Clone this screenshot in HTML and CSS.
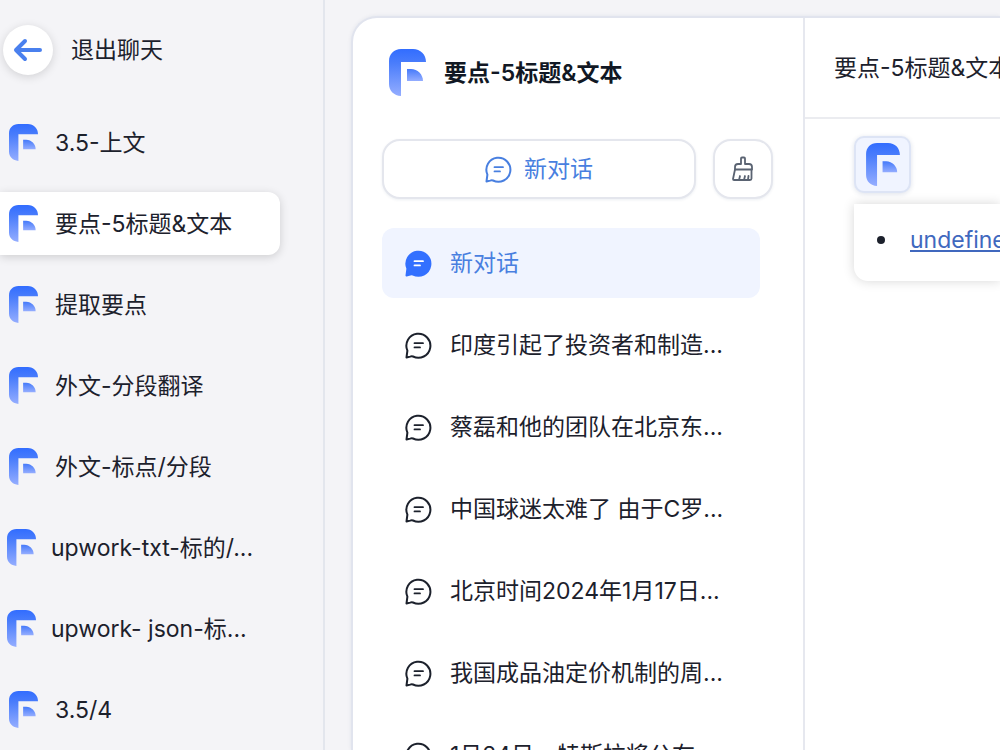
FILE: index.html
```html
<!DOCTYPE html>
<html lang="zh-CN">
<head>
  <meta charset="UTF-8">
  <meta name="viewport" content="width=device-width, initial-scale=1.0">
  <title>要点-5标题&amp;文本</title>
  <link rel="stylesheet" href="styles.css">
</head>
<body>
  <!-- Shared icons -->
  <svg class="sprite" aria-hidden="true">
    <defs>
      <linearGradient id="logoOuter" x1="0" y1="0" x2="0" y2="1">
        <stop offset="0" stop-color="#326dff"/>
        <stop offset="0.3" stop-color="#4a7dfb"/>
        <stop offset="1" stop-color="#94adff"/>
      </linearGradient>
      <linearGradient id="logoInner" x1="0" y1="0" x2="0" y2="1">
        <stop offset="0" stop-color="#457afa"/>
        <stop offset="1" stop-color="#94adff"/>
      </linearGradient>
    </defs>
    <symbol id="logo" viewBox="0 0 37 47">
      <path fill="url(#logoOuter)" d="M12 47C5 46.500 0 42 0 35V12C0 5 5 0 12 0H24C31.500 0 37 5.500 37 13H12Z"/>
      <path fill="url(#logoInner)" d="M18 20H22C28.500 20 34 25.500 34 32H18Z"/>
    </symbol>
    <symbol id="chat" viewBox="0 0 27 27">
      <path fill="none" stroke="currentColor" stroke-width="2" stroke-linejoin="round" d="M1.500 25.500L2.400 18.600A12 12 0 1 1 8 24.500Q6.500 24.100 5.200 24.600Z"/>
      <path fill="none" stroke="currentColor" stroke-width="1.800" stroke-linecap="round" d="M9.500 11.200H18M9.500 15.400H15"/>
    </symbol>
    <symbol id="chatFill" viewBox="0 0 27 27">
      <path fill="#3370ff" stroke="#3370ff" stroke-width="2" stroke-linejoin="round" d="M1.500 25.500L2.400 18.600A12 12 0 1 1 8 24.500Q6.500 24.100 5.200 24.600Z"/>
      <path fill="none" stroke="#fff" stroke-width="1.800" stroke-linecap="round" d="M9.500 11.200H18M9.500 15.400H15"/>
    </symbol>
  </svg>

  <div class="app">
    <aside class="sidebar">
      <div class="exit">
        <button class="back-btn" id="back" aria-label="退出聊天">
          <svg width="30" height="26" viewBox="0 0 30 26"><path d="M12 4L3 13L12 22M3 13H27" fill="none" stroke="#4a80ee" stroke-width="4" stroke-linecap="round" stroke-linejoin="round"/></svg>
        </button>
        <label for="back">退出聊天</label>
      </div>
      <nav class="app-list">
        <a href="#" class="app-item"><svg class="logo"><use href="#logo"/></svg>3.5-上文</a>
        <a href="#" class="app-item active"><svg class="logo"><use href="#logo"/></svg>要点-5标题&amp;文本</a>
        <a href="#" class="app-item"><svg class="logo"><use href="#logo"/></svg>提取要点</a>
        <a href="#" class="app-item"><svg class="logo"><use href="#logo"/></svg>外文-分段翻译</a>
        <a href="#" class="app-item"><svg class="logo"><use href="#logo"/></svg>外文-标点/分段</a>
        <a href="#" class="app-item long"><svg class="logo"><use href="#logo"/></svg>upwork-txt-标的/...</a>
        <a href="#" class="app-item long"><svg class="logo"><use href="#logo"/></svg>upwork- json-标...</a>
        <a href="#" class="app-item"><svg class="logo"><use href="#logo"/></svg>3.5/4</a>
      </nav>
    </aside>

    <main class="panel">
      <section class="history">
        <h1 class="history-title"><svg class="logo-lg"><use href="#logo"/></svg>要点-5标题&amp;文本</h1>
        <div class="actions">
          <button class="new-btn"><svg class="icon"><use href="#chat"/></svg>新对话</button>
          <button class="clear-btn" aria-label="清空">
            <svg width="22" height="26" viewBox="0 0 22 26" fill="none" stroke="#5a6372" stroke-width="1.800" stroke-linejoin="round" stroke-linecap="round">
              <path d="M9 8V2.500Q9 1.500 10 1.500H12Q13 1.500 13 2.500V8H17Q20 8 20 11V13.500H3V11Q3 8 6 8Z"/>
              <path d="M3 13.500L1 23Q1 24 2 24H18Q19.500 24 19.500 22.500V13.500M7 24L8 20M12 24L13 20M16 23.500L16.500 20"/>
            </svg>
          </button>
        </div>
        <nav class="chat-list">
          <a href="#" class="chat-item active"><svg class="icon"><use href="#chatFill"/></svg>新对话</a>
          <a href="#" class="chat-item"><svg class="icon"><use href="#chat"/></svg>印度引起了投资者和制造...</a>
          <a href="#" class="chat-item"><svg class="icon"><use href="#chat"/></svg>蔡磊和他的团队在北京东...</a>
          <a href="#" class="chat-item"><svg class="icon"><use href="#chat"/></svg>中国球迷太难了 由于C罗...</a>
          <a href="#" class="chat-item"><svg class="icon"><use href="#chat"/></svg>北京时间2024年1月17日...</a>
          <a href="#" class="chat-item"><svg class="icon"><use href="#chat"/></svg>我国成品油定价机制的周...</a>
          <a href="#" class="chat-item"><svg class="icon"><use href="#chat"/></svg>1月24日，特斯拉将公布...</a>
        </nav>
      </section>

      <section class="conversation">
        <header class="conversation-header">要点-5标题&amp;文本</header>
        <div class="messages">
          <div class="avatar"><svg><use href="#logo"/></svg></div>
          <div class="bubble">
            <ul>
              <li><a href="#">undefined</a></li>
            </ul>
          </div>
        </div>
      </section>
    </main>
  </div>
</body>
</html>
```
FILE: styles.css
```css
* {
  box-sizing: border-box;
}

body {
  margin: 0;
  background-color: #f4f4f7;
  color: #1c212c;
  font-family: Inter, "Noto Sans CJK SC", sans-serif;
  font-size: 23px;
  line-height: 34px;
}

a {
  color: inherit;
  text-decoration: none;
}

button {
  font: inherit;
  color: inherit;
  padding: 0;
  background-color: #fff;
  cursor: pointer;
}

svg {
  flex-shrink: 0;
}

.sprite {
  position: absolute;
  width: 0;
  height: 0;
}

.app {
  display: flex;
  height: 100vh;
  overflow: hidden;
  white-space: nowrap;
}

/* Left sidebar */
.sidebar {
  flex: 0 0 325px;
  padding-top: 25px;
  border-right: 2px solid #e3e6ed;
}

.exit {
  display: flex;
  align-items: center;
  gap: 18px;
  padding-left: 3px;
  margin-bottom: 36px;
}

.back-btn {
  display: flex;
  align-items: center;
  justify-content: center;
  width: 50px;
  height: 50px;
  border: none;
  border-radius: 50%;
  box-shadow: 0 2px 10px rgba(0, 0, 0, 0.14);
}

.app-list {
  display: flex;
  flex-direction: column;
  gap: 18px;
  margin-right: 43px;
}

.app-item {
  display: flex;
  align-items: center;
  gap: 17px;
  height: 63px;
  padding-left: 9px;
  border-radius: 0 12px 12px 0;
}

.app-item.long {
  gap: 15px;
  padding-left: 7px;
}

.app-item.active {
  background-color: #fff;
  box-shadow: 0 2px 10px rgba(0, 0, 0, 0.16);
}

.logo {
  width: 29px;
  height: 37px;
}

.logo-lg {
  width: 37px;
  height: 47px;
}

.icon {
  width: 27px;
  height: 27px;
}

/* Main panel */
.panel {
  flex: 1;
  display: flex;
  min-width: 0;
  margin: 16px 0 0 26px;
  background-color: #fff;
  border: 2px solid #e1e4ee;
  border-width: 2px 0 0 2px;
  border-radius: 26px 0 0 0;
  box-shadow: 0 0 4px rgba(19, 51, 107, 0.08);
}

.history {
  flex: 0 0 452px;
  padding: 31px 29px 0;
  border-right: 2px solid #e6e8ef;
}

.history-title {
  display: flex;
  align-items: center;
  gap: 18px;
  margin: 0;
  padding-left: 7px;
  color: #111824;
  font-size: 23px;
  font-weight: 600;
}

.actions {
  display: flex;
  gap: 17px;
  margin: 43px 0 29px;
}

.new-btn,
.clear-btn {
  display: flex;
  align-items: center;
  justify-content: center;
  gap: 12px;
  height: 60px;
  border: 2px solid #e4e6ed;
  border-radius: 18px;
  box-shadow: 0 1px 3px rgba(19, 51, 107, 0.08);
}

.new-btn {
  flex: 0 0 314px;
  color: #487fe0;
}

.clear-btn {
  flex: 0 0 60px;
}

.chat-list {
  display: flex;
  flex-direction: column;
  gap: 12px;
  margin-right: 14px;
}

.chat-item {
  display: flex;
  align-items: center;
  gap: 18px;
  height: 70px;
  padding-left: 23px;
  border-radius: 12px;
}

.chat-item.active {
  background-color: #f0f4ff;
  color: #487fe0;
}

/* Conversation */
.conversation {
  flex: 1;
  min-width: 0;
  overflow: hidden;
}

.conversation-header {
  height: 101px;
  padding: 33px 0 0 29px;
  border-bottom: 2px solid #ebecf0;
}

.messages {
  padding: 17px 0 0 49px;
}

.avatar {
  display: flex;
  align-items: center;
  justify-content: center;
  width: 57px;
  height: 57px;
  background-color: #f0f4ff;
  border: 2px solid #dde4f5;
  border-radius: 10px;
  box-shadow: 0 1px 5px rgba(19, 51, 107, 0.14);
}

.avatar svg {
  width: 34px;
  height: 43px;
}

.bubble {
  margin-top: 11px;
  padding: 19px 0 24px;
  border-radius: 0 0 0 14px;
  box-shadow: 0 0 12px rgba(0, 0, 0, 0.16);
}

.bubble ul {
  margin: 0;
  padding-left: 23px;
  list-style: none;
}

.bubble li {
  display: flex;
  align-items: center;
  gap: 25px;
}

.bubble li::before {
  content: "";
  flex: 0 0 8px;
  height: 8px;
  border-radius: 50%;
  background-color: #1c212c;
}

.bubble a {
  color: #4068be;
  text-decoration: underline;
}
```
